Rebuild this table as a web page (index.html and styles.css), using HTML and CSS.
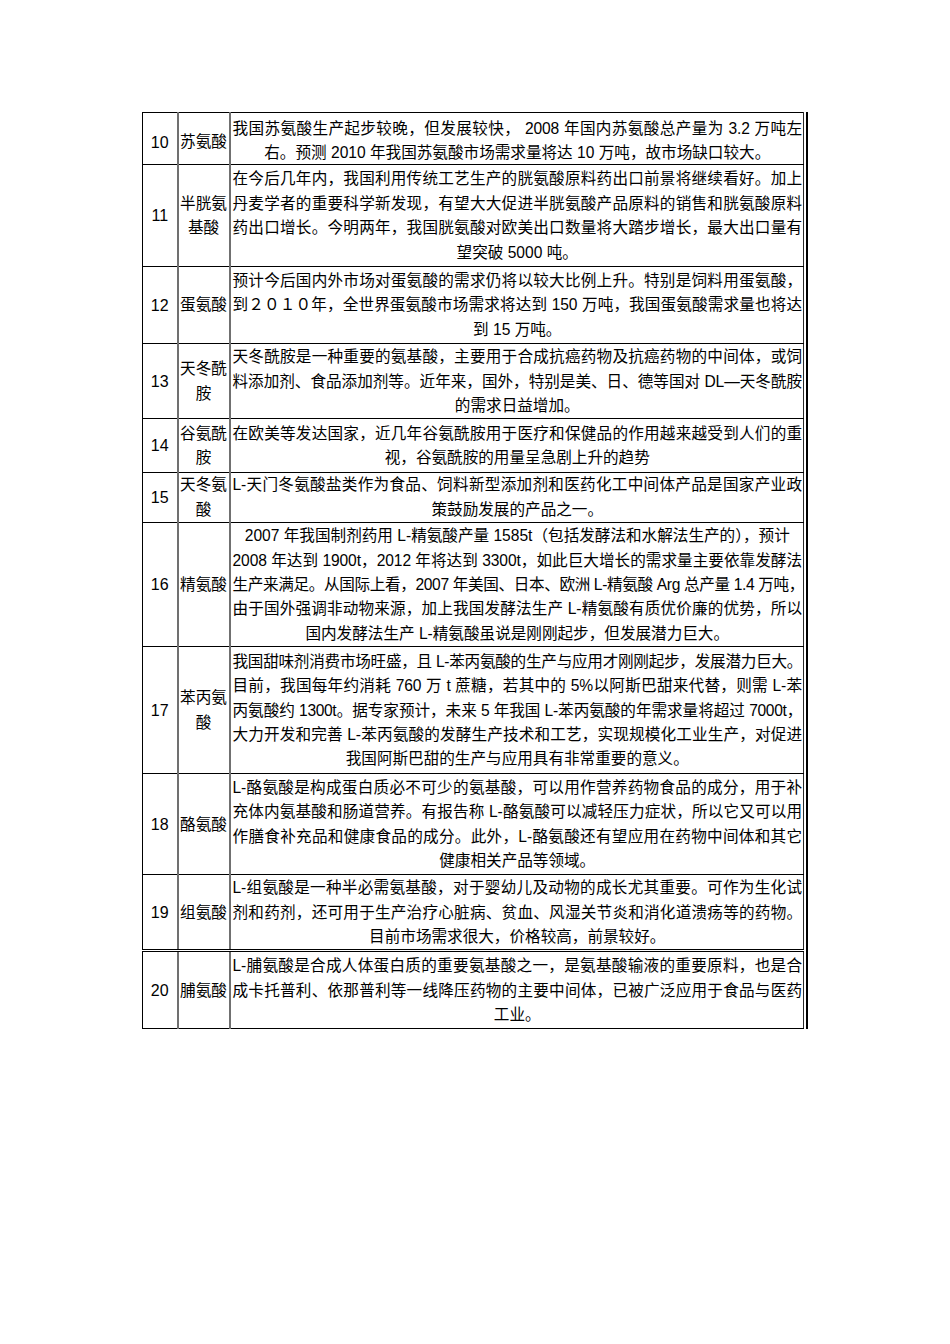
FILE: index.html
```html
<!DOCTYPE html>
<html lang="zh-CN">
<head>
<meta charset="utf-8">
<title>氨基酸市场</title>
<link rel="stylesheet" href="styles.css">
</head>
<body>
<div class="page">
  <div class="frame">
    <table class="grid">
      <colgroup>
        <col class="c-num">
        <col class="c-name">
        <col class="c-text">
      </colgroup>
      <tbody>
        <tr class="h52 low">
          <td class="num">10</td>
          <td class="name">苏氨酸</td>
          <td class="txt">
            <div class="full">我国苏氨酸生产起步较晚，但发展较快， 2008 年国内苏氨酸总产量为 3.2 万吨左</div>
            <div class="last">右。预测 2010 年我国苏氨酸市场需求量将达 10 万吨，故市场缺口较大。</div>
          </td>
        </tr>
        <tr class="h102">
          <td class="num">11</td>
          <td class="name">半胱氨<br>基酸</td>
          <td class="txt">
            <div class="full">在今后几年内，我国利用传统工艺生产的胱氨酸原料药出口前景将继续看好。加上</div>
            <div class="full">丹麦学者的重要科学新发现，有望大大促进半胱氨酸产品原料的销售和胱氨酸原料</div>
            <div class="full">药出口增长。今明两年，我国胱氨酸对欧美出口数量将大踏步增长，最大出口量有</div>
            <div class="last">望突破 5000 吨。</div>
          </td>
        </tr>
        <tr class="h77">
          <td class="num">12</td>
          <td class="name">蛋氨酸</td>
          <td class="txt">
            <div class="full">预计今后国内外市场对蛋氨酸的需求仍将以较大比例上升。特别是饲料用蛋氨酸，</div>
            <div class="full">到２０１０年，全世界蛋氨酸市场需求将达到 150 万吨，我国蛋氨酸需求量也将达</div>
            <div class="last">到 15 万吨。</div>
          </td>
        </tr>
        <tr class="h75">
          <td class="num">13</td>
          <td class="name">天冬酰<br>胺</td>
          <td class="txt">
            <div class="full">天冬酰胺是一种重要的氨基酸，主要用于合成抗癌药物及抗癌药物的中间体，或饲</div>
            <div class="full">料添加剂、食品添加剂等。近年来，国外，特别是美、日、德等国对 DL—天冬酰胺</div>
            <div class="last">的需求日益增加。</div>
          </td>
        </tr>
        <tr class="h54">
          <td class="num">14</td>
          <td class="name">谷氨酰<br>胺</td>
          <td class="txt">
            <div class="full">在欧美等发达国家，近几年谷氨酰胺用于医疗和保健品的作用越来越受到人们的重</div>
            <div class="last">视，谷氨酰胺的用量呈急剧上升的趋势</div>
          </td>
        </tr>
        <tr class="h49 flat">
          <td class="num">15</td>
          <td class="name">天冬氨<br>酸</td>
          <td class="txt">
            <div class="full">L-天门冬氨酸盐类作为食品、饲料新型添加剂和医药化工中间体产品是国家产业政</div>
            <div class="last">策鼓励发展的产品之一。</div>
          </td>
        </tr>
        <tr class="h124">
          <td class="num">16</td>
          <td class="name">精氨酸</td>
          <td class="txt">
            <div class="last">2007 年我国制剂药用 L-精氨酸产量 1585t（包括发酵法和水解法生产的），预计</div>
            <div class="full">2008 年达到 1900t，2012 年将达到 3300t，如此巨大增长的需求量主要依靠发酵法</div>
            <div class="full tight">生产来满足。从国际上看，2007 年美国、日本、欧洲 L-精氨酸 Arg 总产量 1.4 万吨，</div>
            <div class="full">由于国外强调非动物来源，加上我国发酵法生产 L-精氨酸有质优价廉的优势，所以</div>
            <div class="last">国内发酵法生产 L-精氨酸虽说是刚刚起步，但发展潜力巨大。</div>
          </td>
        </tr>
        <tr class="h127">
          <td class="num">17</td>
          <td class="name">苯丙氨<br>酸</td>
          <td class="txt">
            <div class="full tight">我国甜味剂消费市场旺盛，且 L-苯丙氨酸的生产与应用才刚刚起步，发展潜力巨大。</div>
            <div class="full">目前，我国每年约消耗 760 万 t 蔗糖，若其中的 5%以阿斯巴甜来代替，则需 L-苯</div>
            <div class="full tight">丙氨酸约 1300t。据专家预计，未来 5 年我国 L-苯丙氨酸的年需求量将超过 7000t，</div>
            <div class="full">大力开发和完善 L-苯丙氨酸的发酵生产技术和工艺，实现规模化工业生产，对促进</div>
            <div class="last">我国阿斯巴甜的生产与应用具有非常重要的意义。</div>
          </td>
        </tr>
        <tr class="h101">
          <td class="num">18</td>
          <td class="name">酪氨酸</td>
          <td class="txt">
            <div class="full">L-酪氨酸是构成蛋白质必不可少的氨基酸，可以用作营养药物食品的成分，用于补</div>
            <div class="full">充体内氨基酸和肠道营养。有报告称 L-酪氨酸可以减轻压力症状，所以它又可以用</div>
            <div class="full">作膳食补充品和健康食品的成分。此外，L-酪氨酸还有望应用在药物中间体和其它</div>
            <div class="last">健康相关产品等领域。</div>
          </td>
        </tr>
        <tr class="h73">
          <td class="num">19</td>
          <td class="name">组氨酸</td>
          <td class="txt">
            <div class="full">L-组氨酸是一种半必需氨基酸，对于婴幼儿及动物的成长尤其重要。可作为生化试</div>
            <div class="full">剂和药剂，还可用于生产治疗心脏病、贫血、风湿关节炎和消化道溃疡等的药物。</div>
            <div class="last">目前市场需求很大，价格较高，前景较好。</div>
          </td>
        </tr>
        <tr class="h78 dbl">
          <td class="num">20</td>
          <td class="name">脯氨酸</td>
          <td class="txt">
            <div class="full">L-脯氨酸是合成人体蛋白质的重要氨基酸之一，是氨基酸输液的重要原料，也是合</div>
            <div class="full">成卡托普利、依那普利等一线降压药物的主要中间体，已被广泛应用于食品与医药</div>
            <div class="last">工业。</div>
          </td>
        </tr>
      </tbody>
    </table>
  </div>
</div>
</body>
</html>
```

FILE: styles.css
```css
html, body {
  margin: 0;
  padding: 0;
  background: #ffffff;
}

.page {
  padding: 112px 0 0 142px;
  font-family: "Liberation Sans", "Noto Sans CJK SC", sans-serif;
  color: #000000;
}

.frame {
  display: inline-block;
  border-right: 2px solid #000000;
  padding-right: 2px;
}

.grid {
  border-collapse: collapse;
  table-layout: fixed;
  width: 661px;
}

.c-num { width: 35px; }
.c-name { width: 52px; }
.c-text { width: 574px; }

.grid td {
  border: 1px solid #000000;
  vertical-align: middle;
  padding: 1px 0 0 0;
}

.grid tr:first-child td {
  border-top: 1.5px solid #000000;
}

.grid tr:last-child td {
  border-bottom: 1.5px solid #000000;
}

.grid tr.flat td {
  padding-top: 0;
}

.grid td.num {
  border-left: 1.5px solid #000000;
  text-align: center;
  font-size: 16px;
  line-height: 20px;
}

.grid td.name {
  border-left: 2px solid #707070;
  border-right: 2px solid #707070;
  text-align: center;
  font-size: 15.6px;
  line-height: 24.4px;
}

.grid td.txt {
  border-right: 1px solid #2a2a2a;
  font-size: 15.6px;
  line-height: 24.4px;
  padding-left: 2px;
  padding-right: 1px;
}

.grid tr.low td.num,
.grid tr.low td.name {
  padding-top: 8px;
}

.grid tr.low td.txt {
  padding-top: 4px;
  line-height: 23.6px;
}

.grid tr.dbl td {
  border-top: 3px double #000000;
}

.full {
  text-align: justify;
  text-align-last: justify;
  white-space: nowrap;
  letter-spacing: -0.1px;
}

.full.tight {
  letter-spacing: -0.35px;
}

.last {
  text-align: center;
  white-space: nowrap;
}

.h49 { height: 49px; }
.h52 { height: 52px; }
.h54 { height: 54px; }
.h73 { height: 73px; }
.h75 { height: 75px; }
.h77 { height: 77px; }
.h78 { height: 78px; }
.h101 { height: 101px; }
.h102 { height: 102px; }
.h124 { height: 124px; }
.h127 { height: 127px; }
```
